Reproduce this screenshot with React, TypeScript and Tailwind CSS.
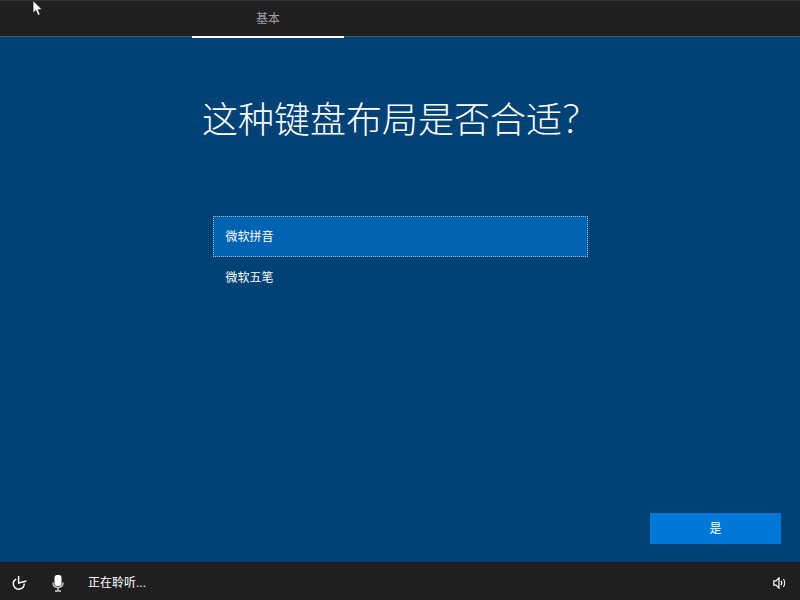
const FONT = "font-['Segoe_UI','Liberation_Sans','Noto_Sans_CJK_SC',sans-serif]";

function Pointer() {
  return (
    <svg className="absolute left-[32px] top-0" width="12" height="17" viewBox="0 0 12 17">
      <path d="M1 0.5 L1 13 L4 10.5 L6 15.5 L8.2 14.5 L6.2 9.8 L10 9.5 Z" fill="#fff" stroke="#111" strokeWidth="0.7" />
    </svg>
  );
}

function EaseOfAccess() {
  return (
    <svg width="15" height="14" viewBox="0 0 15 14" fill="none" stroke="#fff" strokeWidth="1.4">
      <path d="M4.2 3 A5.4 5.4 0 1 0 12.2 7.6" />
      <path d="M6.6 0 L6.6 7 L14.5 5" />
    </svg>
  );
}

function MicIcon() {
  return (
    <svg width="12" height="17" viewBox="0 0 12 17" fill="none">
      <rect x="2.5" y="0" width="7" height="11" rx="2.5" fill="#fff" />
      <path d="M1 7.5 C1 11 3 12.5 6 12.5 C9 12.5 11 11 11 7.5" stroke="#d0d0d0" strokeWidth="1.4" />
      <path d="M6 12.5 L6 15.5 M3 16 L9 16" stroke="#d0d0d0" strokeWidth="1.4" />
    </svg>
  );
}

function SpeakerIcon() {
  return (
    <svg width="13" height="12" viewBox="0 0 13 12" fill="none" stroke="#fff" strokeWidth="1.2">
      <path d="M0.8 3.8 L3 3.8 L6 0.8 L6 11.2 L3 8.2 L0.8 8.2 Z" />
      <path d="M8 3.8 C8.9 5 8.9 7 8 8.2" />
      <path d="M10.4 2 C12 4.2 12 7.8 10.4 10" />
    </svg>
  );
}

export default function App() {
  return (
    <div className={`relative flex h-[600px] w-[800px] flex-col overflow-hidden bg-[#004275] text-white ${FONT}`}>
      <Pointer />

      <header className="flex h-[37px] shrink-0 border-t border-b border-t-[#333333] border-b-[#5a5a5a] bg-[#1f1f1f] pl-[192px]">
        <div className="relative flex h-[36px] w-[152px] items-center justify-center text-[12px] text-[#a0a0a0]">
          基本
          <span className="absolute bottom-[-1px] left-0 h-[2px] w-full bg-white" />
        </div>
      </header>

      <main className="flex flex-1 flex-col items-center">
        <h1 className="mt-[56px] flex h-[48px] items-baseline pr-[18px] text-[36px] leading-[48px] font-light">
          这种键盘布局是否合适<span className="font-['Lato',sans-serif] text-[42px] font-light">?</span>
        </h1>

        <ul className="mt-[75px] w-[375px] text-[12px]">
          <li className="flex h-[41px] items-center border border-dotted border-[#a9bdd2] bg-[#0063b1] pl-[12px]">微软拼音</li>
          <li className="flex h-[41px] items-center pl-[13px]">微软五笔</li>
        </ul>

        <div className="mt-auto mb-[18px] flex w-full justify-end pr-[19px]">
          <button className="h-[31px] w-[131px] bg-[#0078d7] text-[12px] text-white">是</button>
        </div>
      </main>

      <footer className="flex h-[38px] shrink-0 items-center bg-[#1f1f1f] pt-[4px] pr-[14px] pl-[12px] text-[12px]">
        <EaseOfAccess />
        <div className="ml-[25px]"><MicIcon /></div>
        <span className="ml-[24px]">正在聆听...</span>
        <div className="ml-auto"><SpeakerIcon /></div>
      </footer>
    </div>
  );
}
